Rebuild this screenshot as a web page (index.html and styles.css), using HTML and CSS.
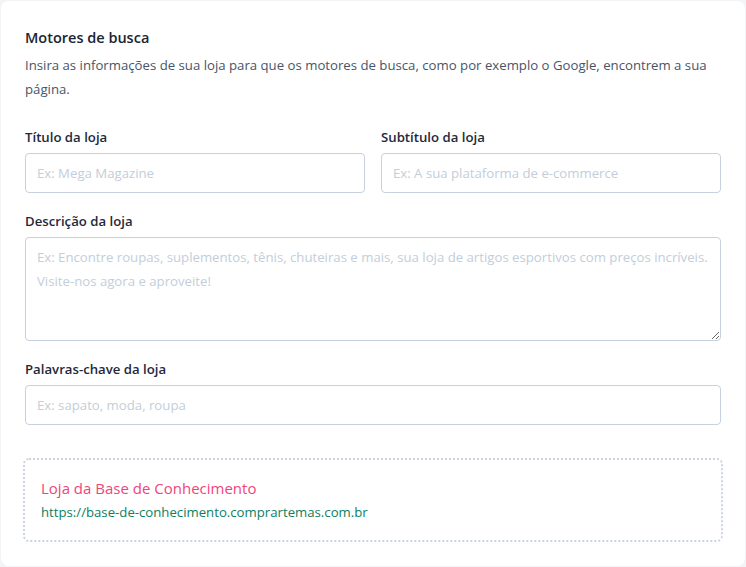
FILE: index.html
```html
<!DOCTYPE html>
<html lang="pt-BR">
<head>
<meta charset="utf-8">
<link rel="stylesheet" href="styles.css">
</head>
<body>
<div class="card">
  <h2 class="title">Motores de busca</h2>
  <p class="desc">Insira as informações de sua loja para que os motores de busca, como por exemplo o Google, encontrem a sua página.</p>
  <div class="row">
    <div class="field">
      <label class="label">Título da loja</label>
      <input class="input" type="text" placeholder="Ex: Mega Magazine">
    </div>
    <div class="field">
      <label class="label">Subtítulo da loja</label>
      <input class="input" type="text" placeholder="Ex: A sua plataforma de e-commerce">
    </div>
  </div>
  <div class="field gap">
    <label class="label">Descrição da loja</label>
    <textarea class="input area" placeholder="Ex: Encontre roupas, suplementos, tênis, chuteiras e mais, sua loja de artigos esportivos com preços incríveis.&#10;Visite-nos agora e aproveite!"></textarea>
  </div>
  <div class="field gap">
    <label class="label">Palavras-chave da loja</label>
    <input class="input" type="text" placeholder="Ex: sapato, moda, roupa">
  </div>
  <div class="preview">
    <div class="pv-title">Loja da Base de Conhecimento</div>
    <div class="pv-url">https://base-de-conhecimento.comprartemas.com.br</div>
  </div>
</div>
</body>
</html>
```

FILE: styles.css
```css
html, body {
  margin: 0;
  padding: 0;
  background: #f3f4f6;
}
body {
  padding: 1px;
  font-family: "Open Sans", "Noto Sans", sans-serif;
  box-sizing: border-box;
  height: 567px;
}
.card {
  background: #ffffff;
  border-radius: 8px;
  padding: 24px;
  box-sizing: border-box;
  height: 565px;
}
.title {
  margin: 0;
  font-size: 14.5px;
  line-height: 26px;
  font-weight: 600;
  color: #1a2433;
}
.desc {
  margin: 2px 0 0;
  font-size: 13.2px;
  line-height: 24px;
  color: #475569;
}
.row {
  display: grid;
  grid-template-columns: 1fr 1fr;
  gap: 16px;
  margin-top: 26px;
}
.field {
  display: flex;
  flex-direction: column;
}
.gap {
  margin-top: 18px;
}
.label {
  font-size: 13.2px;
  line-height: 20px;
  font-weight: 600;
  color: #1e293b;
  margin-bottom: 6px;
}
.input {
  height: 40px;
  box-sizing: border-box;
  border: 1px solid #c5d1de;
  border-radius: 4px;
  padding: 0 11px;
  font-family: inherit;
  font-size: 13.2px;
  color: #334155;
  background: #fff;
  outline: none;
}
.input::placeholder {
  color: #c3ceda;
}
.area {
  height: 104px;
  padding: 7px 11px;
  line-height: 24px;
  resize: vertical;
}
.preview {
  margin: 33px -2px 0;
  border: 2px dotted #cbd3df;
  border-radius: 6px;
  padding: 16px 16px;
}
.pv-title {
  font-size: 15px;
  line-height: 24px;
  color: #f0457a;
}
.pv-url {
  font-size: 13.2px;
  line-height: 24px;
  color: #0e8060;
}
```
